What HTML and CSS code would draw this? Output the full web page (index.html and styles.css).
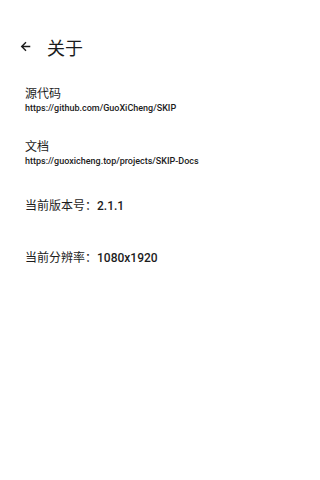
FILE: index.html
```html
<!DOCTYPE html>
<html lang="zh">
<head>
<meta charset="utf-8">
<link rel="stylesheet" href="styles.css">
</head>
<body>
<div class="page">
  <header class="bar">
    <svg class="back" width="13" height="13" viewBox="0 0 24 24"><path d="M19.5 12H5.5M12 5l-7 7 7 7" fill="none" stroke="#1c1c1c" stroke-width="2.6" stroke-linecap="square"/></svg>
    <span class="title">关于</span>
  </header>
  <section class="item first">
    <div class="label">源代码</div>
    <div class="link">https://github.com/GuoXiCheng/SKIP</div>
  </section>
  <section class="item second">
    <div class="label">文档</div>
    <div class="link">https://guoxicheng.top/projects/SKIP-Docs</div>
  </section>
  <div class="info version">当前版本号：<span class="num">2.1.1</span></div>
  <div class="info res">当前分辨率：<span class="num">1080x1920</span></div>
</div>
</body>
</html>
```

FILE: styles.css
```css
html, body {
  margin: 0;
  padding: 0;
  background: #ffffff;
}
.page {
  width: 269px;
  height: 480px;
  font-family: Roboto, "Noto Sans CJK SC", sans-serif;
  color: #1c1c1c;
}
.bar {
  display: flex;
  align-items: center;
  height: 24px;
  padding: 35px 0 0 19px;
}
.back {
  display: block;
  margin-top: -2px;
}
.title {
  margin-left: 15px;
  font-family: "Noto Sans CJK SC", sans-serif;
  font-size: 18px;
  line-height: 24px;
}
.item {
  padding-left: 25px;
}
.first {
  margin-top: 26px;
}
.second {
  margin-top: 24px;
}
.label {
  font-family: "Noto Sans CJK SC", sans-serif;
  font-size: 12px;
  line-height: 16px;
}
.link {
  margin-top: 1px;
  font-size: 9px;
  font-weight: 500;
  line-height: 12px;
}
.info {
  padding-left: 25px;
  font-family: "Noto Sans CJK SC", sans-serif;
  font-size: 12px;
  line-height: 16px;
}
.info .num {
  font-family: Roboto, sans-serif;
  font-weight: 500;
}
.version {
  margin-top: 30px;
}
.res {
  margin-top: 35px;
}
```
